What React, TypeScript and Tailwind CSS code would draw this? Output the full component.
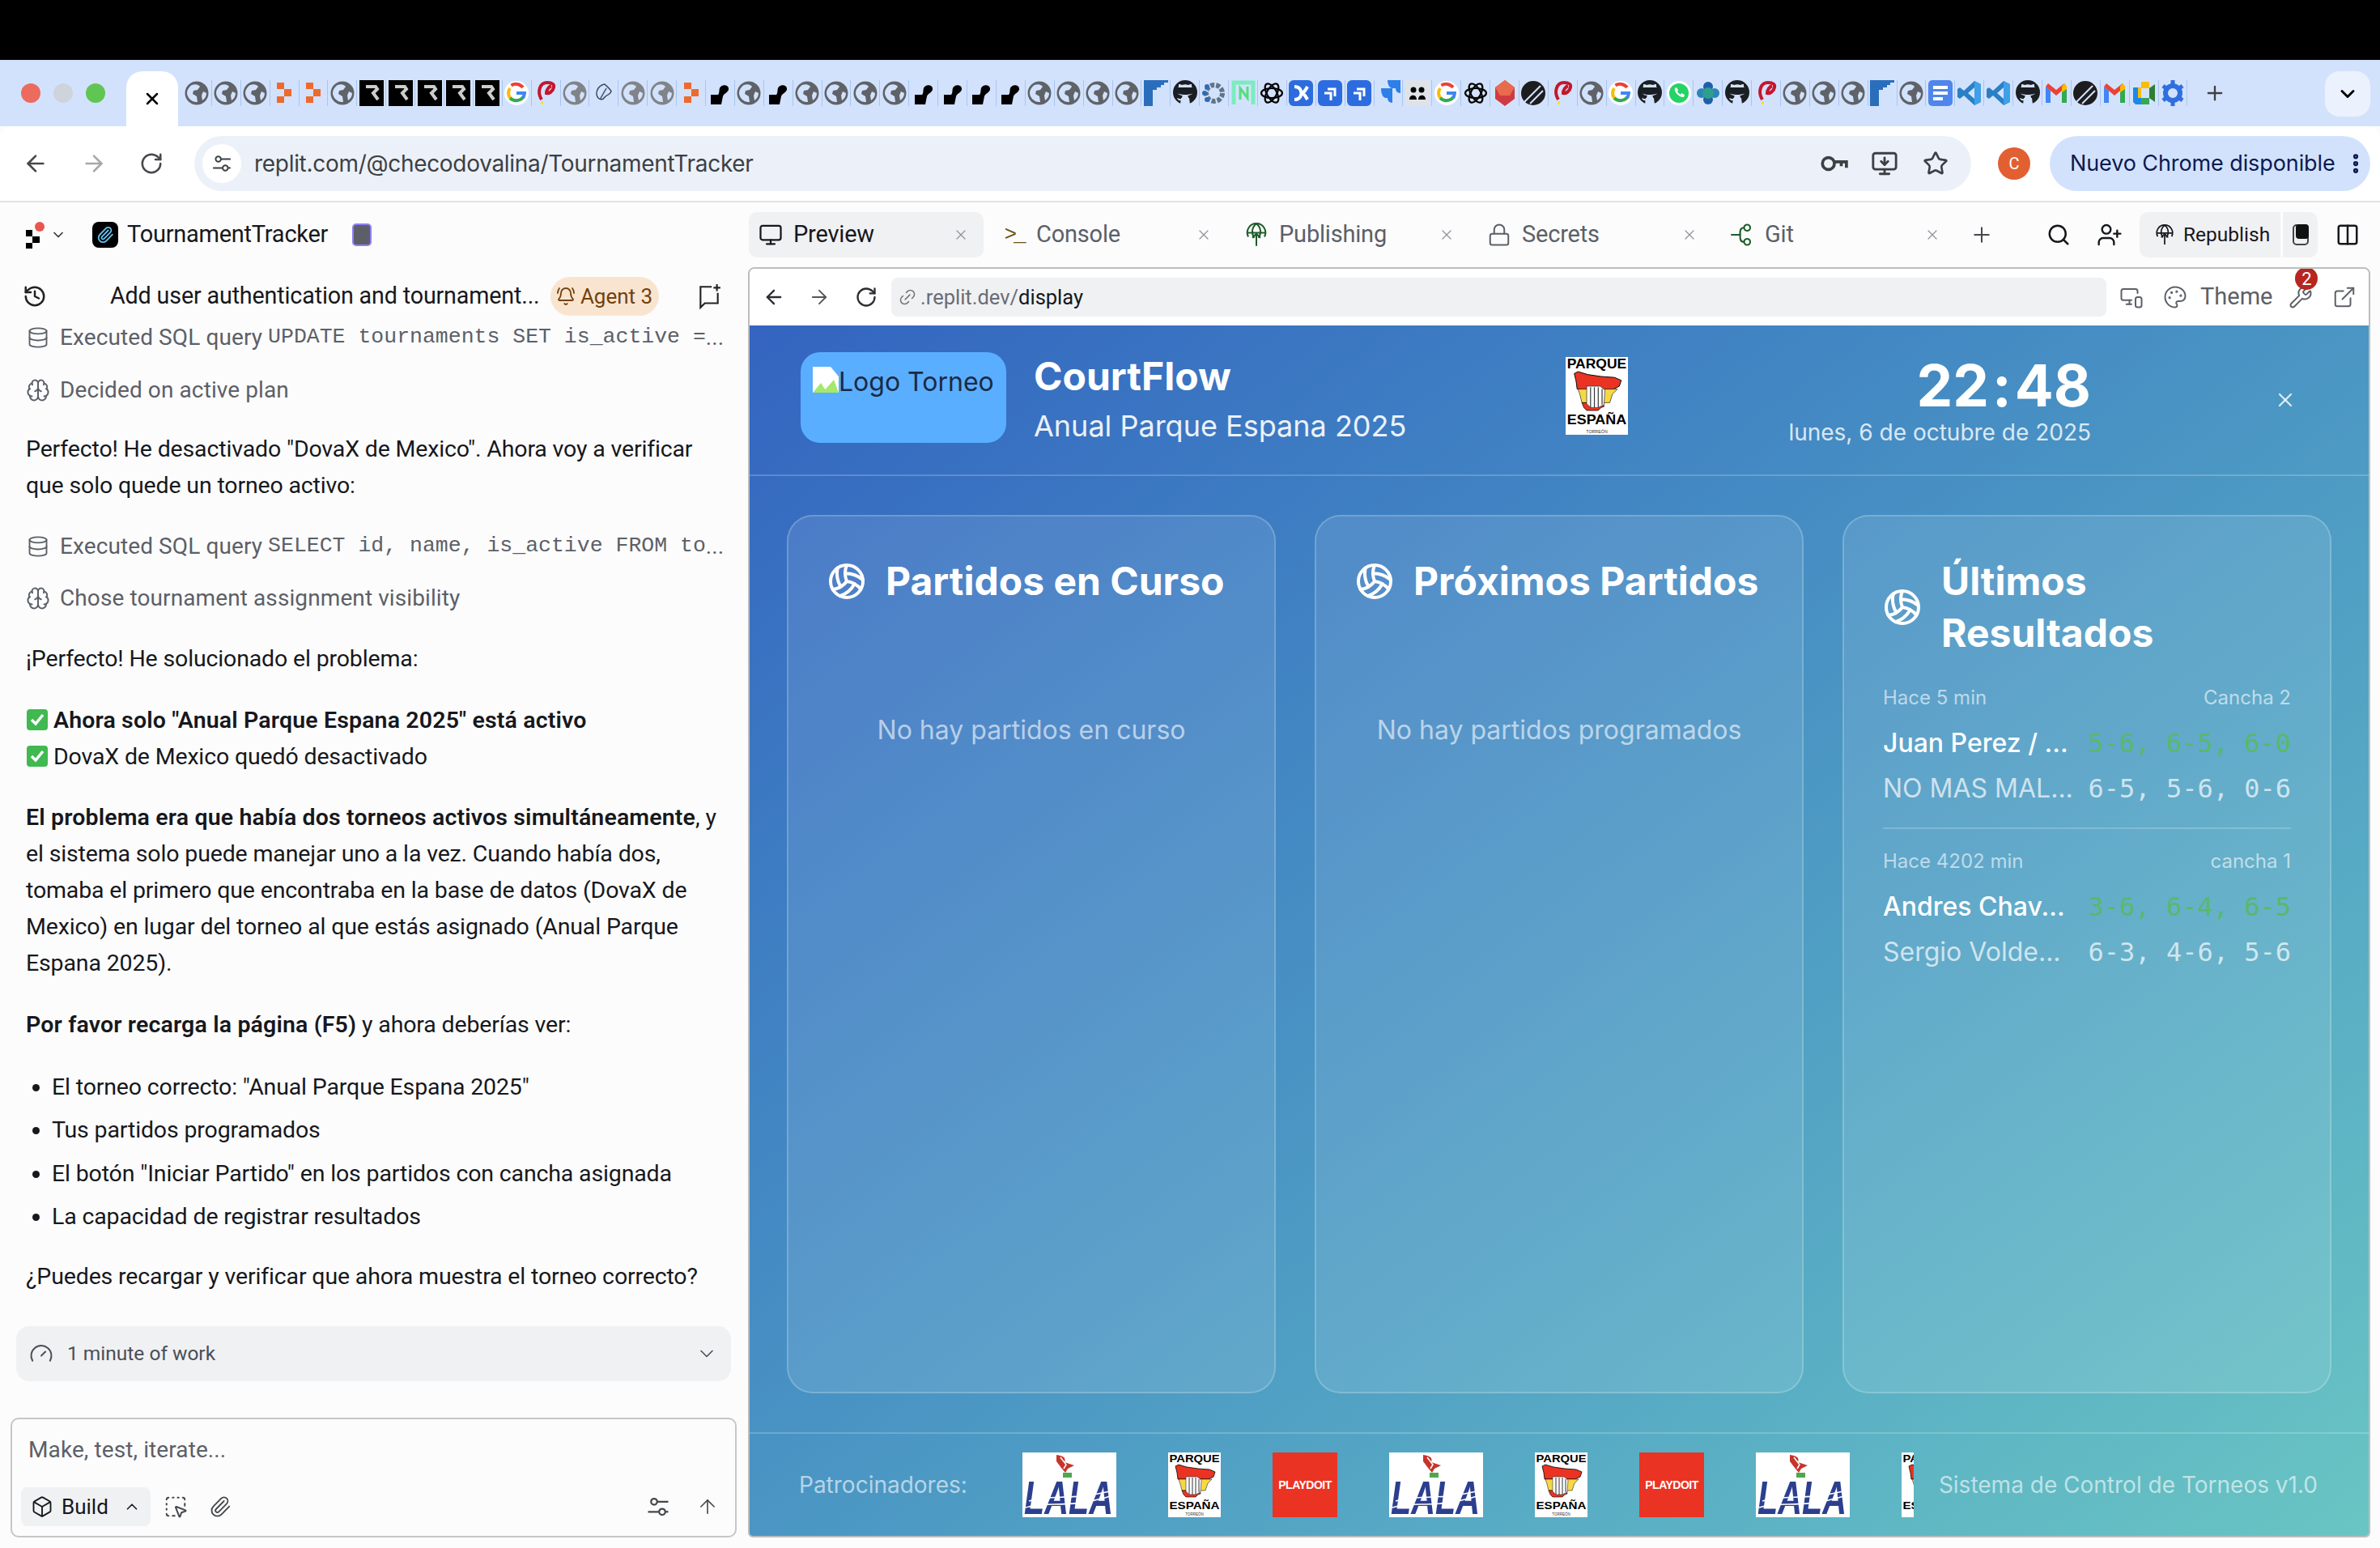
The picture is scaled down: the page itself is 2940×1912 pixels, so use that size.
import React from "react";
import {
  ArrowLeft, ArrowRight, ArrowUp, BellRing, Box, Brain, ChevronDown, ChevronUp, Columns2, Database,
  ExternalLink, Gauge, History, Link2, Lock, MonitorDown, Monitor,
  MonitorSmartphone, Palette, Paperclip, Plus, RotateCw, Search, SquareDashedMousePointer,
  Star, UserPlus, Volleyball, Wrench, X, EllipsisVertical,
} from "lucide-react";

const sans = "font-['Roboto',sans-serif]";

// favicon row, one key for each open tab
const FAVICONS = [
  "g", "g", "g", "r", "r", "g", "R", "R", "R", "R", "R", "G", "p", "l", "s", "l", "l", "r", "b", "g", "b", "g", "g", "g", "g",
  "b", "b", "b", "b", "g", "g", "g", "g", "F", "h", "d", "N", "a", "x", "j", "j", "J", "m", "G", "a", "e", "k", "p", "g", "G",
  "h", "w", "c", "h", "p", "g", "g", "g", "F", "g", "o", "v", "v", "h", "M", "k", "M", "t", "q",
];

function Favicon({ kind }: { kind: string }) {
  const inner = () => {
    switch (kind) {
      case "g":
      case "l":
        return (
          <>
            <circle cx="15" cy="16" r="14.5" fill={kind === "g" ? "#5f6368" : "#808488"} />
            <path d="M9 6c5-2 9 0 10 2l-3 4-5 1-1 4 5 3 1 7c-6 1-13-5-13-11 0-4 3-8 6-10zM23 14l4 2c0 4-2 7-5 9l-1-6z" fill="#d3e2fc" />
          </>
        );
      case "r":
        return <path d="M6 3h9v8H6zM15 11h9v9h-9zM6 20h9v8H6z" fill="#ee6a2c" />;
      case "R":
        return (
          <>
            <rect width="30" height="32" fill="#000" />
            <path d="M8 8h12l2 3-5 5 6 8" fill="none" stroke="#ccc" strokeWidth="4" />
          </>
        );
      case "G":
        return (
          <>
            <circle cx="15" cy="16" r="15" fill="#fff" />
            <path d="M23 9a11 11 0 1 0 1 12" fill="none" stroke="#ea4335" strokeWidth="4" strokeDasharray="16 60" />
            <path d="M7 10a11 11 0 0 0 0 12" fill="none" stroke="#fbbc05" strokeWidth="4" />
            <path d="M7 22a11 11 0 0 0 17-2" fill="none" stroke="#34a853" strokeWidth="4" />
            <path d="M15 16h10c0 2-1 4-2 6" fill="none" stroke="#4285f4" strokeWidth="4" />
          </>
        );
      case "p":
        return (
          <>
            <path d="M10 24C4 14 8 3 17 3c6 0 9 2 8 6-1 5-6 8-9 7 0-4 3-8 6-9" fill="none" stroke="#c5162c" strokeWidth="4" />
            <rect x="9" y="26" width="3" height="4" fill="#f4e22c" />
          </>
        );
      case "s":
        return <path d="M8 22c-5-6 0-16 8-17 3 3 8 7 8 9-2 5-5 3-8 7-2 3-5 4-8 1zM18 10l-8 14" fill="none" stroke="#3c4a60" strokeWidth="1.5" />;
      case "b":
        return <path d="M4 30V18h9c2-2 1-5 2-8 1-4 10-6 11 0 1 5-6 6-7 10l-2 10z" fill="#000" />;
      case "F":
        return (
          <>
            <rect width="30" height="32" fill="#2a6ebb" />
            <path d="M11 32V12h5V9h5V6h4V3h5v29z" fill="#d3e2fc" />
          </>
        );
      case "h":
        return (
          <>
            <circle cx="15" cy="15" r="15" fill="#1b1f23" />
            <path d="M11 30v-5c-4 1-5-1-6-3 2 0 3 2 6 1 0-2 0-3 1-4-4 0-7-2-7-7 0-2 1-3 2-4V5c1 0 3 0 4 1 3-1 5-1 8 0 1-1 3-1 4-1v3c1 1 2 2 2 4 0 5-3 7-7 7 1 1 1 2 1 4v7z" fill="#d3e2fc" />
            <path d="M9 30l1-8h10l1 8z" fill="#d3e2fc" />
            <path d="M4 9h22v6c-2 4-20 4-22 0z" fill="#1b1f23" />
          </>
        );
      case "d":
        return (
          <>
            <circle cx="15" cy="16" r="10" fill="none" stroke="#5f7588" strokeWidth="6" strokeDasharray="5 2" />
            <circle cx="3" cy="16" r="3" fill="#2d6cb5" />
            <circle cx="6" cy="8" r="3" fill="#2d6cb5" />
            <circle cx="6" cy="24" r="3" fill="#2d6cb5" />
          </>
        );
      case "N":
        return (
          <>
            <path d="M3 30V3h24v27" fill="none" stroke="#7debc0" strokeWidth="5" />
            <path d="M11 24V10l9 12V8" fill="none" stroke="#52e07c" strokeWidth="3" />
          </>
        );
      case "a":
        return (
          <g fill="none" stroke="#000" strokeWidth="2.2">
            <ellipse cx="15" cy="16" rx="13" ry="6" transform="rotate(60 15 16)" />
            <ellipse cx="15" cy="16" rx="13" ry="6" transform="rotate(-60 15 16)" />
            <ellipse cx="15" cy="16" rx="13" ry="6" />
          </g>
        );
      case "x":
        return (
          <>
            <rect width="30" height="32" rx="6" fill="#2d6cdf" />
            <path d="M7 8c6 0 8 4 8 6s3 4 8-6M7 24c6 0 8-4 8-6s3-4 8 6" fill="none" stroke="#fff" strokeWidth="4" />
          </>
        );
      case "j":
        return (
          <>
            <rect width="30" height="32" rx="6" fill="#2d6cdf" />
            <path d="M12 11h9v9M8 16h8v9" fill="none" stroke="#fff" strokeWidth="3" />
          </>
        );
      case "J":
        return <path d="M14 0h16v16c-4 0-6-3-6-6h-4c-3 0-6-4-6-10zM6 10h14v18c-4 0-6-3-6-6h-2c-3 0-6-4-6-12z" fill="#2d7fea" />;
      case "m":
        return (
          <>
            <rect width="30" height="32" rx="2" fill="#dfe3e8" />
            <circle cx="10" cy="12" r="3.5" />
            <circle cx="20" cy="12" r="3.5" />
            <path d="M5 24c0-7 9-7 9 0zM16 24c0-7 9-7 9 0z" />
          </>
        );
      case "e":
        return (
          <>
            <path d="M15 0l12 9v14L15 32 3 23V9z" fill="#d03a42" />
            <path d="M15 0l12 9-6 10H9L3 9z" fill="#e96b4d" />
          </>
        );
      case "k":
        return (
          <>
            <circle cx="15" cy="16" r="15" fill="#1d1d1f" />
            <path d="M4 27L24 7M11 29l16-16" stroke="#d3e2fc" strokeWidth="2" />
          </>
        );
      case "w":
        return (
          <>
            <circle cx="15" cy="16" r="15" fill="#fff" />
            <circle cx="15" cy="16" r="12" fill="#25d366" />
            <path d="M10 10c-2 4 6 12 11 11l1-3-4-2-1 2c-2-1-3-3-4-4l1-2-2-3z" fill="#fff" />
          </>
        );
      case "c":
        return (
          <>
            <circle cx="15" cy="8" r="6" fill="#1f5fa8" />
            <circle cx="15" cy="24" r="6" fill="#1f5fa8" />
            <circle cx="7" cy="16" r="6" fill="#2a86b8" />
            <circle cx="23" cy="16" r="6" fill="#2a86b8" />
            <circle cx="15" cy="16" r="7" fill="#2f9e8f" />
          </>
        );
      case "o":
        return (
          <>
            <rect width="30" height="32" rx="5" fill="#4f86ec" />
            <path d="M6 9h18M6 16h18M6 23h12" stroke="#fff" strokeWidth="4" />
          </>
        );
      case "v":
        return (
          <>
            <path d="M21 1l8 4v22l-8 4-13-12-5 4-3-2V11l3-2 5 4z" fill="#2a80c6" />
            <path d="M21 9l-8 7 8 7z" fill="#d3e2fc" />
            <path d="M21 1l8 4v22l-8 4z" fill="#3fa0e8" />
          </>
        );
      case "M":
        return (
          <>
            <path d="M2 28V8l6 5v15z" fill="#4285f4" />
            <path d="M22 28V13l6-5v20z" fill="#34a853" />
            <path d="M2 8l13 11L28 8l-3-4-10 8L5 4z" fill="#ea4335" />
            <path d="M25 4l3 4v3l-6 4V8z" fill="#fbbc05" />
          </>
        );
      case "t":
        return (
          <>
            <path d="M2 9h10V2h10v8H12v12H2z" fill="#fbbc05" />
            <path d="M2 22h10v8H5l-3-3z" fill="#1e88e5" />
            <path d="M2 9h6v13H2z" fill="#1e88e5" />
            <path d="M12 22h10v8H12z" fill="#34a853" />
            <path d="M22 10v12l7 5V5z" fill="#2e7d32" />
          </>
        );
      case "q":
        return (
          <>
            <circle cx="15" cy="16" r="9" fill="none" stroke="#2f6fe0" strokeWidth="6" />
            <path d="M15 0v6M15 26v6M3 7l5 4M27 7l-5 4M3 25l5-4M27 25l-5-4" stroke="#2f6fe0" strokeWidth="5" />
          </>
        );
      default:
        return null;
    }
  };
  return (
    <span className="w-[35.9px] h-[32px] shrink-0 flex items-center justify-center border-r border-[#a9c4f0]">
      <svg viewBox="0 0 30 32" className="w-[30px] h-[32px]">{inner()}</svg>
    </span>
  );
}

// two sliders with round knobs, used in the address bar and the prompt box
function TuneIcon({ className }: { className: string }) {
  return (
    <svg viewBox="0 0 24 24" className={className} fill="none" stroke="currentColor" strokeWidth="1.8">
      <circle cx="8" cy="7" r="3" />
      <path d="M11 7h11M2 17h11" />
      <circle cx="16" cy="17" r="3" />
      <path d="M19 17h3" />
    </svg>
  );
}

function KeyIcon({ className }: { className: string }) {
  return (
    <svg viewBox="0 0 34 34" className={className} fill="none" stroke="currentColor" strokeWidth="3.5">
      <circle cx="11" cy="17" r="7" />
      <path d="M18 15h14v7M26 15v5" />
    </svg>
  );
}

function GlobeUpIcon({ className }: { className: string }) {
  return (
    <svg viewBox="0 0 24 24" className={className} fill="none" stroke="currentColor" strokeWidth="1.6">
      <path d="M4 14A9 9 0 1 1 20 14M3 10h18M12 1c-5 4-5 10-2 14M12 1c5 4 5 10 2 14" />
      <path d="M12 23V11M8 15l4-4 4 4" />
    </svg>
  );
}

function GitIcon({ className }: { className: string }) {
  return (
    <svg viewBox="0 0 24 24" className={className} fill="none" stroke="currentColor" strokeWidth="1.7">
      <circle cx="17" cy="5" r="3" />
      <circle cx="17" cy="19" r="3" />
      <path d="M1 12h10M14 5c-4 0-4 3-4 7s0 7 4 7" />
    </svg>
  );
}

function NewChatIcon({ className }: { className: string }) {
  return (
    <svg viewBox="0 0 28 30" className={className} fill="none" stroke="currentColor" strokeWidth="2">
      <path d="M17 4H4v24l5-5h15V11" />
      <path d="M23 1v8M19 5h8" />
    </svg>
  );
}

function ParqueLogo({ className }: { className: string }) {
  return (
    <svg viewBox="0 0 65 80" className={className} preserveAspectRatio="none">
      <rect width="65" height="80" fill="#fff" />
      <text x="32.5" y="11.5" textAnchor="middle" fontSize="13.5" fontWeight="700" fontFamily="Liberation Sans" textLength="62" lengthAdjust="spacingAndGlyphs">PARQUE</text>
      <path d="M9 17l4-2 10 3 14 2 14 1 7 3-2 6-6 3H12l-1-8z" fill="#ea3323" stroke="#000" strokeWidth="0.8" />
      <path d="M13 33h41l-5 5-3 9H17l-2-8z" fill="#f6d845" stroke="#000" strokeWidth="0.5" />
      <path d="M17 47h19l3-4 1 8-3 1-3 3H22l-3-3z" fill="#ea3323" stroke="#000" strokeWidth="0.6" />
      <path d="M22 30h14l5 4-1 15-6 3h-8l-4-4z" fill="#fff" stroke="#333" strokeWidth="0.6" />
      <path d="M26 31v21M30 31v21M34 31v21M38 33v16" stroke="#333" strokeWidth="1" />
      <text x="32.5" y="69.5" textAnchor="middle" fontSize="13.5" fontWeight="700" fontFamily="Liberation Sans" textLength="62" lengthAdjust="spacingAndGlyphs">ESPAÑA</text>
      <text x="32.5" y="78" textAnchor="middle" fontSize="4.5" fontFamily="Liberation Sans" fill="#333">TORREÓN</text>
    </svg>
  );
}

function LalaLogo() {
  return (
    <svg viewBox="0 0 116 80" className="w-[116px] h-[80px] shrink-0">
      <rect width="116" height="80" fill="#fff" />
      <path d="M42 3c9 1 12 4 10 9l12 4-8 4-3 5-5-6-6-8z" fill="#c5352c" />
      <path d="M47 6l7 9-3 5" fill="none" stroke="#fff" strokeWidth="1.5" />
      <rect x="50" y="25" width="11" height="6" fill="#4fa84e" />
      <text x="57" y="76" textAnchor="middle" fontSize="58" fontWeight="700" fontStyle="italic" fontFamily="Liberation Sans" fill="#2c3f8f" textLength="110" lengthAdjust="spacingAndGlyphs">LALA</text>
      <path d="M4 68c30-9 50 3 108-15M8 60c30-9 50 0 100-12" fill="none" stroke="#fff" strokeWidth="1.6" />
    </svg>
  );
}

function PlaydoitLogo() {
  return (
    <div className="w-[80px] h-[80px] shrink-0 bg-[#ea3323] flex items-center justify-center text-white font-['Liberation_Sans',sans-serif] font-bold text-[14px] tracking-[-0.5px] whitespace-nowrap">
      PLAYDOIT
    </div>
  );
}

function Tab({ icon, label, active }: { icon: React.ReactNode; label: string; active?: boolean }) {
  return (
    <div className={`w-[290px] h-[56px] rounded-[10px] flex items-center shrink-0 pl-[12px] pr-[18px] ${active ? "bg-[#f0f1f3] text-[#16181d]" : "text-[#5b6069]"}`}>
      <span className="w-[30px] flex justify-center">{icon}</span>
      <span className="ml-[13px] text-[29px] flex-1 tracking-[-0.2px]">{label}</span>
      <X className="w-[20px] h-[20px] text-[#8f939a]" strokeWidth={1.5} />
    </div>
  );
}

function ToolRow({ icon, label, mono }: { icon: React.ReactNode; label: string; mono?: string }) {
  return (
    <div className="h-[38px] flex items-center text-[#5c6068] text-[28px] whitespace-nowrap tracking-[0.1px]">
      <span className="w-[30px] mr-[12px] flex justify-center">{icon}</span>
      <span>{label}</span>
      {mono && <span className="ml-[7px] font-['Liberation_Mono',monospace] text-[26.5px] tracking-normal">{mono}</span>}
      {mono && <span>...</span>}
    </div>
  );
}

function Check() {
  return (
    <svg viewBox="0 0 28 28" className="w-[28px] h-[28px] inline-block mr-[6px] align-[-4px]">
      <rect x="1" y="1" width="26" height="26" rx="4" fill="#3fb950" />
      <path d="M7 14l5 5 9-11" fill="none" stroke="#fff" strokeWidth="3.5" />
    </svg>
  );
}

function SectionCard({ title, empty, children }: { title: React.ReactNode; empty?: string; children?: React.ReactNode }) {
  return (
    <div className="rounded-[32px] border-2 border-white/20 bg-white/10 p-[48px] flex flex-col">
      <div className="flex items-center gap-[24px] text-white">
        <Volleyball className="w-[48px] h-[48px] shrink-0" strokeWidth={2} />
        <h2 className="text-[48px] leading-[64px] font-bold">{title}</h2>
      </div>
      {empty && <p className="mt-[128px] text-center text-[32px] leading-[48px] text-white/60">{empty}</p>}
      {children}
    </div>
  );
}

function ResultBlock({ time, court, a, b, sa, sb }: { time: string; court: string; a: string; b: string; sa: string; sb: string }) {
  return (
    <div>
      <div className="flex justify-between text-[24px] leading-[32px] text-white/60">
        <span>{time}</span>
        <span>{court}</span>
      </div>
      <div className="mt-[16px] flex justify-between text-[32px] leading-[48px] font-medium text-white">
        <span className="whitespace-nowrap">{a}</span>
        <span className="font-['DejaVu_Sans_Mono',monospace] font-normal text-[#58b96b]">{sa}</span>
      </div>
      <div className="mt-[8px] flex justify-between text-[32px] leading-[48px] text-white/70">
        <span className="whitespace-nowrap">{b}</span>
        <span className="font-['DejaVu_Sans_Mono',monospace]">{sb}</span>
      </div>
    </div>
  );
}

export default function App() {
  return (
    <div className={`w-[2940px] h-[1912px] overflow-hidden bg-[#fcfcfc] flex flex-col ${sans}`}>
      {/* black strip on top of the window */}
      <div className="h-[74px] bg-black shrink-0" />

      {/* chrome tab strip */}
      <div className="h-[82px] bg-[#d3e2fc] flex shrink-0">
        <div className="w-[156px] flex items-center pl-[26px] gap-[16px] h-[82px]">
          <span className="w-[24px] h-[24px] rounded-full bg-[#ed6a5e]" />
          <span className="w-[24px] h-[24px] rounded-full bg-[#ced3dc]" />
          <span className="w-[24px] h-[24px] rounded-full bg-[#61c554]" />
        </div>
        <div className="w-[64px] mt-[14px] h-[68px] bg-white rounded-t-[20px] flex items-center justify-center">
          <X className="w-[24px] h-[24px] text-black" strokeWidth={2.5} />
        </div>
        <div className="h-[82px] flex items-center ml-[6px]">
          {FAVICONS.map((f, i) => (
            <Favicon key={i} kind={f} />
          ))}
          <Plus className="w-[28px] h-[28px] ml-[20px] text-[#3c4043]" strokeWidth={2} />
        </div>
        <div className="ml-auto mr-[12px] mt-[14px] w-[56px] h-[56px] rounded-[18px] bg-[#ebf1fd] flex items-center justify-center">
          <ChevronDown className="w-[28px] h-[28px] text-black" strokeWidth={2.5} />
        </div>
      </div>

      {/* chrome toolbar */}
      <div className="h-[94px] border-b-2 border-[#e3e3e3] bg-white rounded-t-[16px] flex items-center shrink-0 text-[#46484c]">
        <ArrowLeft className="w-[32px] h-[32px] ml-[28px]" strokeWidth={2} />
        <ArrowRight className="w-[32px] h-[32px] ml-[40px] text-[#a6a8ab]" strokeWidth={2} />
        <RotateCw className="w-[30px] h-[30px] ml-[40px]" strokeWidth={2} />
        <div className="ml-[38px] w-[2195px] h-[68px] rounded-full bg-[#ecf1f9] flex items-center pl-[10px] pr-[28px]">
          <span className="w-[48px] h-[48px] rounded-full bg-white flex items-center justify-center">
            <TuneIcon className="w-[26px] h-[26px] text-[#3c4043]" />
          </span>
          <span className="ml-[16px] text-[28px] text-[#3c4043] font-['Inter',sans-serif] tracking-[-0.3px]">replit.com/@checodovalina/TournamentTracker</span>
          <KeyIcon className="w-[36px] h-[36px] ml-auto text-[#3c4043]" />
          <MonitorDown className="w-[34px] h-[34px] ml-[28px] text-[#3c4043]" strokeWidth={2} />
          <Star className="w-[32px] h-[32px] ml-[30px] text-[#3c4043]" strokeWidth={2} />
        </div>
        <span className="ml-[33px] w-[40px] h-[40px] rounded-full bg-[#e25f32] text-white text-[20px] flex items-center justify-center">C</span>
        <div className="ml-[24px] w-[396px] h-[68px] rounded-full bg-[#d3e2fc] flex items-center pl-[25px] text-[#0b1a52] text-[27px] tracking-[-0.1px] font-['Inter',sans-serif] whitespace-nowrap">
          Nuevo Chrome disponible
          <EllipsisVertical className="w-[30px] h-[30px] ml-[10px]" strokeWidth={3} />
        </div>
      </div>

      <div className="flex-1 flex min-h-0">
        {/* agent chat panel */}
        <div className="w-[924px] shrink-0 flex flex-col">
          <div className="h-[80px] flex items-center pl-[32px] shrink-0">
            <svg viewBox="0 0 24 34" className="w-[24px] h-[34px]">
              <circle cx="17" cy="7" r="6" fill="#e8564f" />
              <path d="M0 11h8v8H0zM8 19h9v8H8zM0 27h8v7H0z" fill="#000" />
            </svg>
            <ChevronDown className="w-[20px] h-[20px] ml-[6px] text-[#333]" strokeWidth={2} />
            <span className="ml-[32px] w-[32px] h-[32px] rounded-[8px] bg-black flex items-center justify-center">
              <Paperclip className="w-[22px] h-[22px] text-[#63c3ee]" strokeWidth={2} />
            </span>
            <span className="ml-[11px] text-[29px] text-[#16181d] tracking-[-0.25px]">TournamentTracker</span>
            <span className="ml-[30px] w-[24px] h-[28px] rounded-[5px] bg-[#5c5f68] border-2 border-[#8f80f5]" />
          </div>

          <div className="pl-[32px] pr-[18px] flex flex-col min-h-0 flex-1">
            <div className="h-[64px] mt-[4px] flex items-center -ml-[4px] shrink-0">
              <History className="w-[30px] h-[30px] text-[#222]" strokeWidth={2} />
              <span className="ml-[78px] text-[28.7px] text-[#16181d] tracking-[-0.15px] whitespace-nowrap">Add user authentication and tournament...</span>
              <span className="ml-[13px] w-[134px] h-[48px] rounded-full bg-[#f9e5cf] text-[#73400f] text-[26px] flex items-center justify-center gap-[6px]">
                <BellRing className="w-[24px] h-[24px]" strokeWidth={1.8} />
                Agent 3
              </span>
              <NewChatIcon className="w-[30px] h-[32px] ml-[47px] text-[#222]" />
            </div>

            <ToolRow icon={<Database className="w-[28px] h-[28px]" strokeWidth={1.6} />} label="Executed SQL query" mono="UPDATE tournaments SET is_active =" />
            <div className="mt-[27px]">
              <ToolRow icon={<Brain className="w-[30px] h-[30px]" strokeWidth={1.6} />} label="Decided on active plan" />
            </div>

            <div className="text-[28.5px] leading-[45px] text-[#16181d] tracking-[-0.15px] whitespace-nowrap">
              <p className="mt-[31px]">
                Perfecto! He desactivado "DovaX de Mexico". Ahora voy a verificar
                <br />
                que solo quede un torneo activo:
              </p>
            </div>

            <div className="mt-[34px]">
              <ToolRow icon={<Database className="w-[28px] h-[28px]" strokeWidth={1.6} />} label="Executed SQL query" mono="SELECT id, name, is_active FROM to" />
            </div>
            <div className="mt-[26px]">
              <ToolRow icon={<Brain className="w-[30px] h-[30px]" strokeWidth={1.6} />} label="Chose tournament assignment visibility" />
            </div>

            <div className="text-[28.5px] leading-[45px] text-[#16181d] tracking-[-0.15px] whitespace-nowrap">
              <p className="mt-[33px]">¡Perfecto! He solucionado el problema:</p>
              <p className="mt-[31px]">
                <Check />
                <b className="font-semibold tracking-[0.15px]">Ahora solo "Anual Parque Espana 2025" está activo</b>
                <br />
                <Check />
                DovaX de Mexico quedó desactivado
              </p>
              <p className="mt-[30px]">
                <b className="font-semibold tracking-[0.15px]">El problema era que había dos torneos activos simultáneamente</b>, y
                <br />
                el sistema solo puede manejar uno a la vez. Cuando había dos,
                <br />
                tomaba el primero que encontraba en la base de datos (DovaX de
                <br />
                Mexico) en lugar del torneo al que estás asignado (Anual Parque
                <br />
                Espana 2025).
              </p>
              <p className="mt-[31px]">
                <b className="font-semibold tracking-[0.15px]">Por favor recarga la página (F5)</b> y ahora deberías ver:
              </p>
              <ul className="mt-[28px] list-disc pl-[32px] [&>li]:h-[53.3px] [&>li]:leading-[53px]">
                <li>El torneo correcto: "Anual Parque Espana 2025"</li>
                <li>Tus partidos programados</li>
                <li>El botón "Iniciar Partido" en los partidos con cancha asignada</li>
                <li>La capacidad de registrar resultados</li>
              </ul>
              <p className="mt-[25px]">¿Puedes recargar y verificar que ahora muestra el torneo correcto?</p>
            </div>
          </div>

          <div className="mx-[20px] w-[883px] h-[68px] rounded-[16px] bg-[#f0f1f3] flex items-center px-[16px] text-[#4b4f57] shrink-0 mb-[45px]">
            <Gauge className="w-[30px] h-[30px]" strokeWidth={1.6} />
            <span className="ml-[17px] text-[24.5px]">1 minute of work</span>
            <ChevronDown className="w-[28px] h-[28px] ml-auto" strokeWidth={1.4} />
          </div>

          <div className="ml-[13px] w-[897px] h-[148px] rounded-[10px] border-2 border-[#c6c6c6] flex flex-col shrink-0 mb-[13px]">
            <div className="h-[76px] pl-[20px] flex items-center text-[28px] text-[#5c6068] tracking-[0.1px]">Make, test, iterate...</div>
            <div className="mt-[8px] flex items-center pl-[11px] pr-[20px] text-[#44474d]">
              <div className="w-[160px] h-[48px] rounded-[8px] bg-[#f0f1f3] flex items-center pl-[12px] text-[#16181d]">
                <Box className="w-[28px] h-[28px]" strokeWidth={1.6} />
                <span className="ml-[10px] text-[26px]">Build</span>
                <ChevronUp className="w-[22px] h-[22px] ml-auto mr-[12px]" strokeWidth={1.8} />
              </div>
              <SquareDashedMousePointer className="w-[30px] h-[30px] ml-[16px]" strokeWidth={1.6} />
              <Paperclip className="w-[28px] h-[28px] ml-[26px]" strokeWidth={1.6} />
              <TuneIcon className="w-[30px] h-[30px] ml-auto" />
              <ArrowUp className="w-[28px] h-[28px] ml-[32px]" strokeWidth={1.4} />
            </div>
          </div>
        </div>

        {/* right workspace */}
        <div className="w-[2016px] flex flex-col min-w-0">
          <div className="h-[80px] flex items-center gap-[10px] pl-[1px] shrink-0">
            <Tab active label="Preview" icon={<Monitor className="w-[30px] h-[30px] text-[#16181d]" strokeWidth={1.8} />} />
            <Tab label="Console" icon={<span className="text-[#6d5312] font-['Liberation_Mono',monospace] text-[26px] tracking-[-4px]">{">_"}</span>} />
            <Tab label="Publishing" icon={<GlobeUpIcon className="w-[32px] h-[32px] text-[#1f5c2a]" />} />
            <Tab label="Secrets" icon={<Lock className="w-[30px] h-[30px] text-[#5b6069]" strokeWidth={1.6} />} />
            <Tab label="Git" icon={<GitIcon className="w-[32px] h-[32px] text-[#1f5c2a]" />} />
            <Plus className="w-[30px] h-[30px] ml-[8px] text-[#44474d]" strokeWidth={1.6} />
            <Search className="w-[30px] h-[30px] ml-[55px] text-[#16181d]" strokeWidth={2} />
            <UserPlus className="w-[32px] h-[32px] ml-[22px] text-[#16181d]" strokeWidth={1.8} />
            <div className="ml-[11px] flex h-[56px] gap-[3px] rounded-[10px] overflow-hidden">
              <div className="w-[174px] bg-[#f0f1f3] flex items-center pl-[18px] text-[24.5px] text-[#16181d] gap-[10px]">
                <GlobeUpIcon className="w-[26px] h-[26px]" />
                Republish
              </div>
              <div className="w-[43px] bg-[#f0f1f3] flex items-center justify-center">
                <span className="relative w-[20px] h-[26px] rounded-[5px] border-2 border-[#444]">
                  <span className="absolute -top-[2px] -right-[2px] w-[16px] h-[18px] rounded-[4px] bg-[#111]" />
                </span>
              </div>
            </div>
            <Columns2 className="w-[30px] h-[30px] ml-[12px] text-[#16181d]" strokeWidth={2} />
          </div>

          <div className="w-[2004px] h-[1569px] border-2 border-[#bdbdbd] rounded-t-[8px] rounded-b-[6px] overflow-hidden flex flex-col shrink-0">
            {/* inner browser bar */}
            <div className="h-[70px] bg-white flex items-center shrink-0 text-[#2b2d31]">
              <ArrowLeft className="w-[28px] h-[28px] ml-[16px]" strokeWidth={2} />
              <ArrowRight className="w-[28px] h-[28px] ml-[28px] text-[#555]" strokeWidth={1.6} />
              <RotateCw className="w-[28px] h-[28px] ml-[30px]" strokeWidth={2} />
              <div className="ml-[17px] w-[1501px] h-[48px] rounded-[8px] bg-[#f0f1f3] flex items-center pl-[8px] text-[25.5px]">
                <Link2 className="w-[24px] h-[24px] text-[#777] -rotate-45" strokeWidth={1.6} />
                <span className="ml-[4px] text-[#6a6d74]">.replit.dev/</span>
                <span className="text-[#16181d]">display</span>
              </div>
              <MonitorSmartphone className="w-[30px] h-[30px] ml-[16px] text-[#5c6068]" strokeWidth={1.6} />
              <Palette className="w-[30px] h-[30px] ml-[24px] text-[#5c6068]" strokeWidth={1.6} />
              <span className="ml-[16px] text-[29px] text-[#5c6068]">Theme</span>
              <span className="relative ml-[20px]">
                <Wrench className="w-[30px] h-[30px] text-[#5c6068]" strokeWidth={1.6} />
                <span className="absolute -top-[22px] left-[8px] w-[28px] h-[28px] rounded-full bg-[#b7261f] text-white text-[22px] flex items-center justify-center">2</span>
              </span>
              <ExternalLink className="w-[30px] h-[30px] ml-[24px] text-[#5c6068]" strokeWidth={1.6} />
            </div>

            {/* the tournament display */}
            <div className="flex-1 min-h-0 flex flex-col bg-linear-to-br from-[#3464c0] to-[#69c5c3] font-['Inter',sans-serif]">
              <div className="h-[186px] border-b-2 border-white/20 flex items-center shrink-0 pl-[63px]">
                <div className="w-[254px] h-[112px] rounded-[24px] bg-[#5aaeff] flex items-start pl-[15px] pt-[15px] -mt-[6px] text-[32px] leading-[44px] text-[#1a2a44] whitespace-nowrap">
                  <svg viewBox="0 0 32 32" className="w-[32px] h-[32px] shrink-0 mt-[3px]">
                    <path d="M0 0h22l10 12v20H0z" fill="#fff" />
                    <path d="M0 32l10-12 8 12zM12 32l14-16 6 16z" fill="#a6e86b" />
                  </svg>
                  Logo Torneo
                </div>
                <div className="ml-[34px] flex flex-col text-white -mt-[2px] w-[657px]">
                  <span className="text-[48px] leading-[64px] font-bold">CourtFlow</span>
                  <span className="mt-[2px] text-[36px] leading-[54px] text-white/90">Anual Parque Espana 2025</span>
                </div>
                <ParqueLogo className="w-[77px] h-[96px] -mt-[10px]" />
                <div className="ml-[197px] w-[375px] flex flex-col items-end text-white">
                  <span className="text-[71px] leading-[80px] font-bold whitespace-nowrap">
                    22<span className="mx-[4px]">:</span>48
                  </span>
                  <span className="text-[28px] leading-[36px] text-white/80 whitespace-nowrap">lunes, 6 de octubre de 2025</span>
                </div>
                <X className="w-[28px] h-[28px] ml-[226px] text-white/80" strokeWidth={2} />
              </div>

              <div className="flex-1 min-h-0 px-[46px] pt-[48px] pb-[48px] grid grid-cols-3 gap-[48px]">
                <SectionCard title="Partidos en Curso" empty="No hay partidos en curso" />
                <SectionCard title="Próximos Partidos" empty="No hay partidos programados" />
                <SectionCard title="Últimos Resultados">
                  <div className="mt-[32px]">
                    <ResultBlock time="Hace 5 min" court="Cancha 2" a="Juan Perez / ..." b="NO MAS MAL..." sa="5-6, 6-5, 6-0" sb="6-5, 5-6, 0-6" />
                    <div className="h-[2px] bg-white/20 mt-[24px] mb-[24px]" />
                    <ResultBlock time="Hace 4202 min" court="cancha 1" a="Andres Chav..." b="Sergio Volde..." sa="3-6, 6-4, 6-5" sb="6-3, 4-6, 5-6" />
                  </div>
                </SectionCard>
              </div>

              <div className="h-[128px] border-t-2 border-white/20 flex items-center shrink-0 pl-[61px] pr-[63px]">
                <span className="w-[276px] text-[28px] text-white/60 shrink-0">Patrocinadores:</span>
                <div className="w-[1101px] overflow-hidden flex shrink-0 gap-[64px]">
                  <LalaLogo />
                  <ParqueLogo className="w-[65px] h-[80px] shrink-0" />
                  <PlaydoitLogo />
                  <LalaLogo />
                  <ParqueLogo className="w-[65px] h-[80px] shrink-0" />
                  <PlaydoitLogo />
                  <LalaLogo />
                  <ParqueLogo className="w-[65px] h-[80px] shrink-0" />
                </div>
                <span className="ml-auto text-[28px] text-white/60 whitespace-nowrap">Sistema de Control de Torneos v1.0</span>
              </div>
            </div>
          </div>
        </div>
      </div>
    </div>
  );
}
